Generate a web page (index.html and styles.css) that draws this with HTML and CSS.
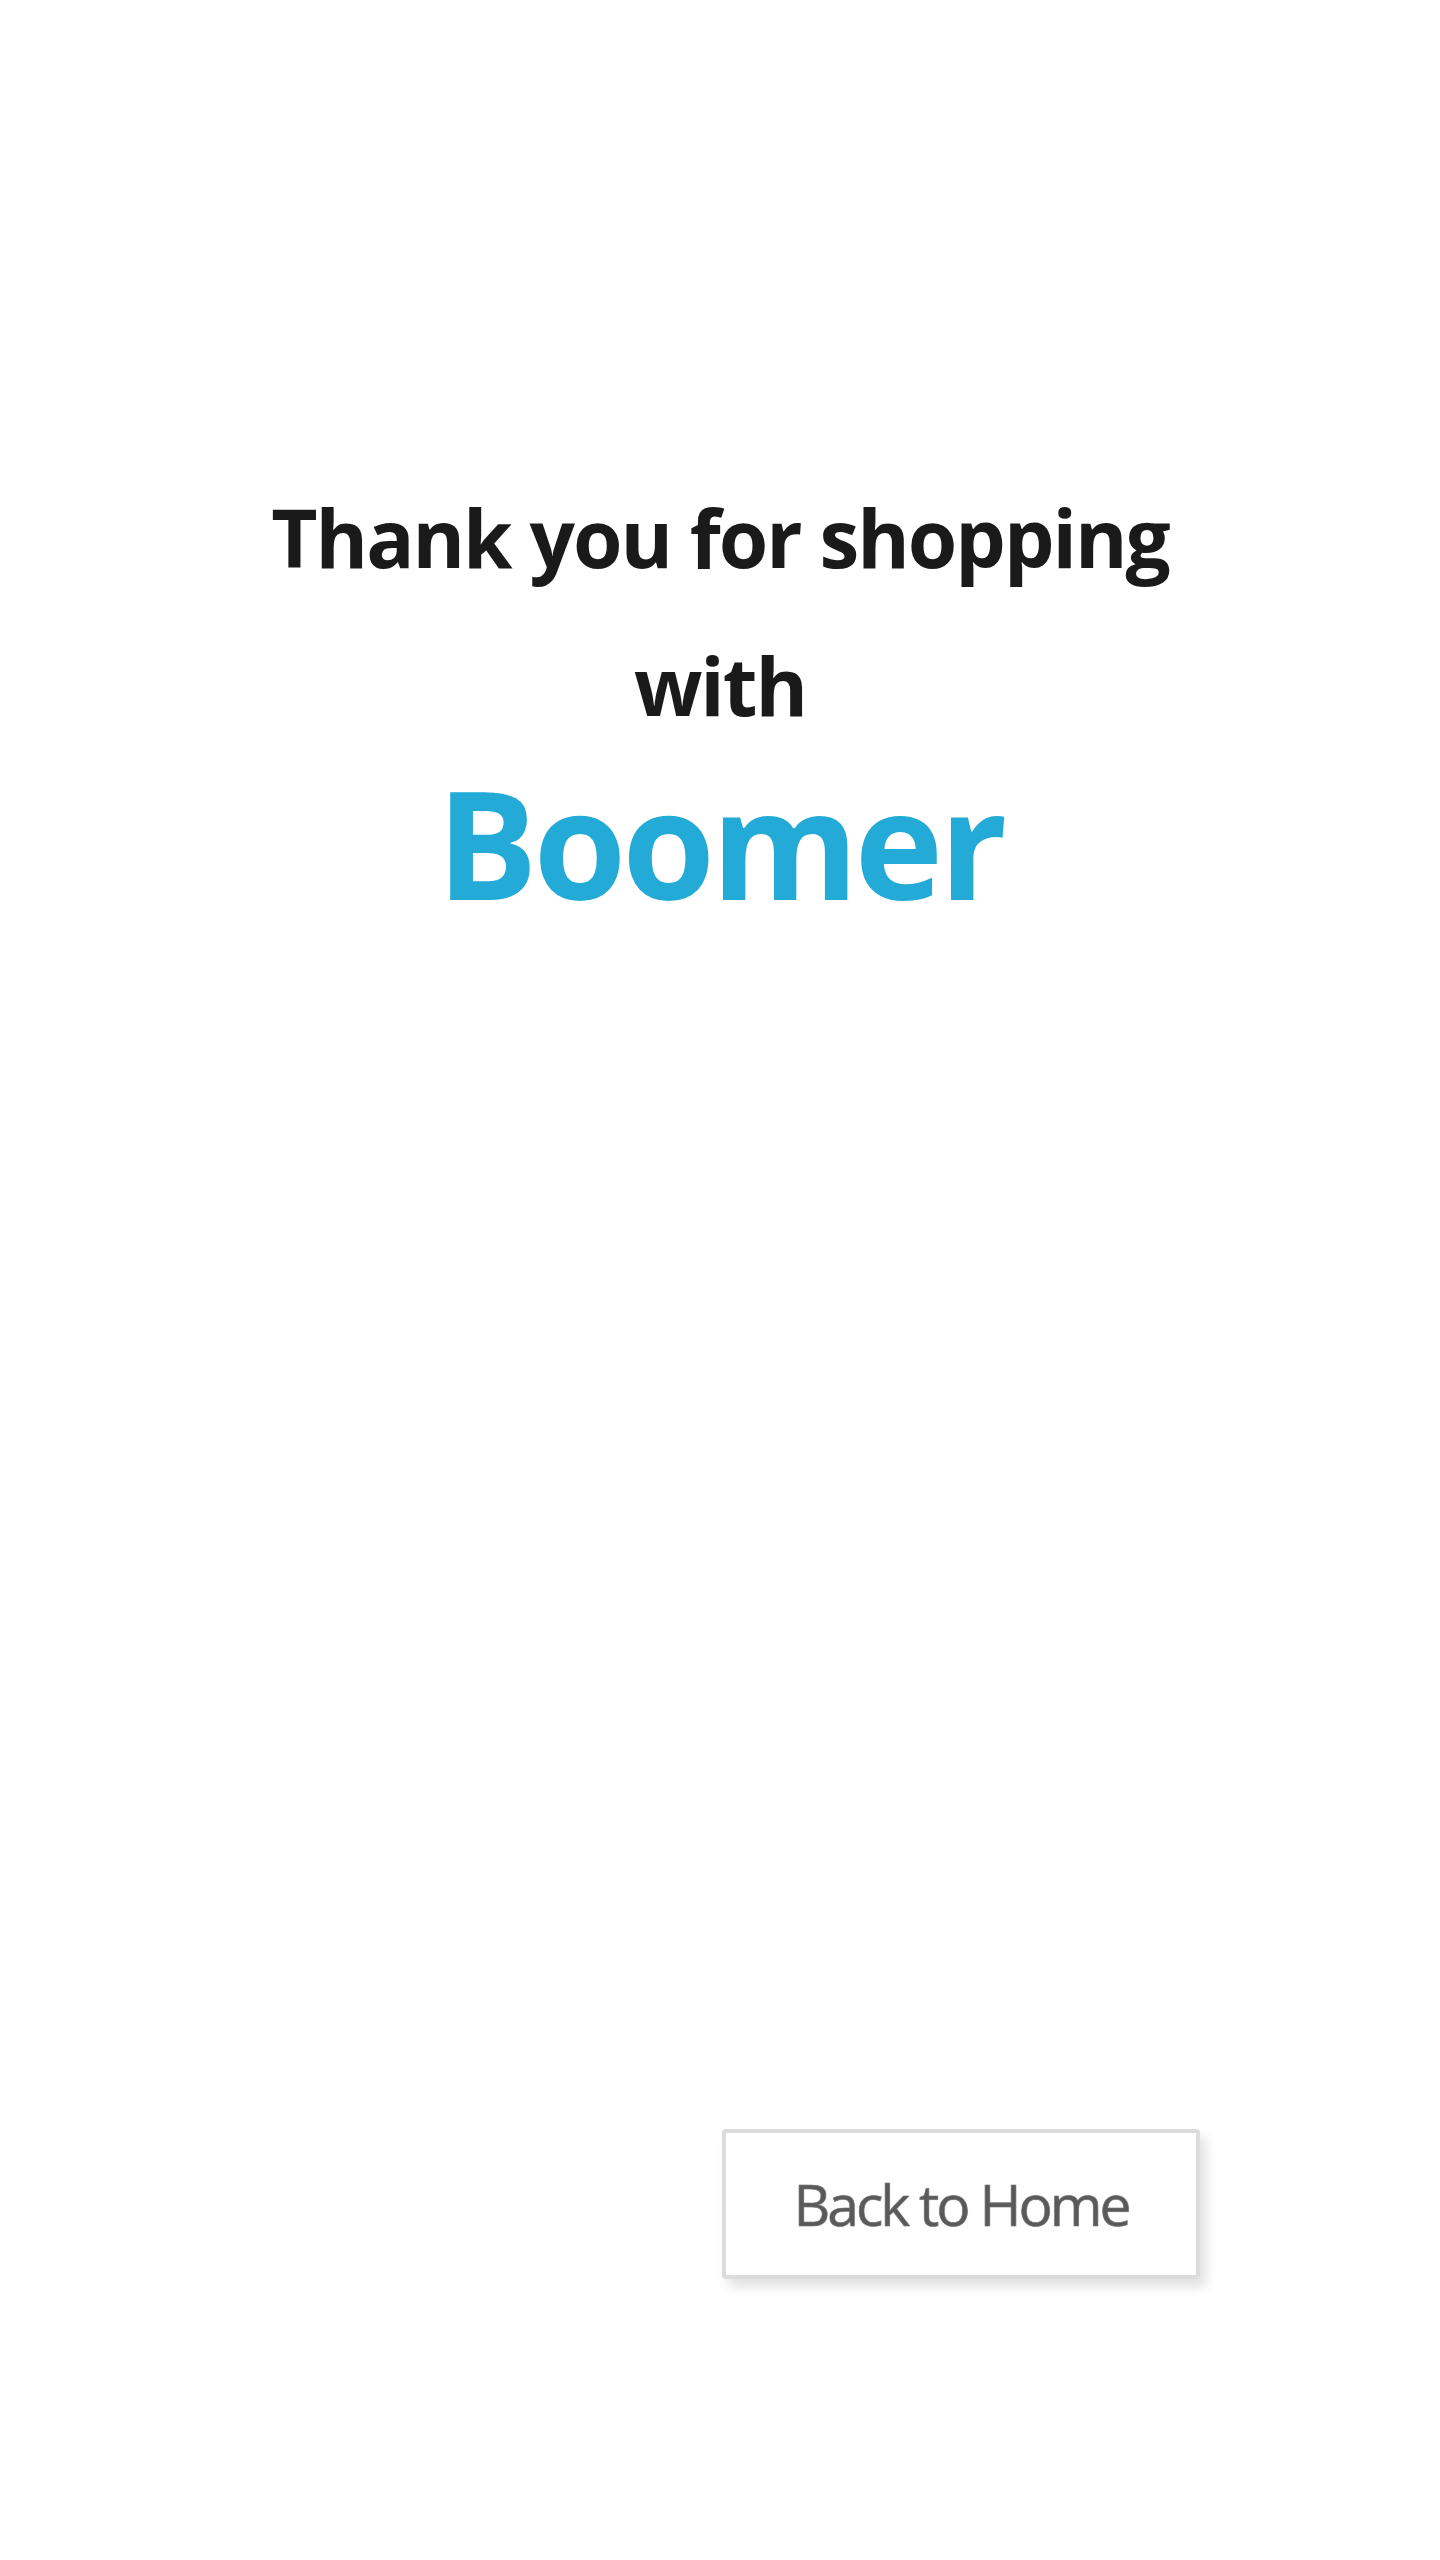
FILE: index.html
```html
<!DOCTYPE html>
<html lang="en">
<head>
<meta charset="utf-8">
<title>Thank you</title>
<link rel="stylesheet" href="styles.css">
</head>
<body>
<main class="page">
  <section class="thanks">
    <h1 class="thanks-title">Thank you for shopping with</h1>
    <p class="brand">Boomer</p>
  </section>
  <div class="actions">
    <div class="spacer"></div>
    <div class="action-col">
      <button class="home-btn" type="button">Back to Home</button>
    </div>
  </div>
</main>
</body>
</html>
```

FILE: styles.css
```css
html, body {
  margin: 0;
  padding: 0;
  background: #ffffff;
}

body {
  font-family: "Open Sans", "Noto Sans", "Liberation Sans", sans-serif;
}

.page {
  width: 1440px;
  min-height: 2560px;
  padding-top: 463px;
  box-sizing: border-box;
}

.thanks {
  display: flex;
  flex-direction: column;
  align-items: center;
}

.thanks-title {
  margin: 0;
  max-width: 960px;
  font-size: 80px;
  line-height: 148px;
  font-weight: 700;
  color: #1a1a1a;
  text-align: center;
  letter-spacing: -2px;
}

.brand {
  margin: 8px 0 0;
  font-size: 150px;
  line-height: 150px;
  font-weight: 700;
  color: #23aad6;
  letter-spacing: -4px;
}

.actions {
  display: grid;
  grid-template-columns: 1fr 1fr;
  margin-top: 1212px;
}

.action-col {
  display: flex;
  padding-left: 2px;
}

.home-btn {
  width: 478px;
  height: 150px;
  border: 4px solid #dcdcdc;
  border-radius: 4px;
  background: #ffffff;
  box-shadow: 6px 8px 12px rgba(0, 0, 0, 0.12);
  font-family: "Open Sans", "Noto Sans", sans-serif;
  font-size: 57px;
  font-weight: 400;
  color: #5a5a5a;
  text-shadow: 0 0 1px #8a8a8a;
  -webkit-text-stroke: 0.6px #7a7a7a;
  letter-spacing: -3px;
  padding: 0;
  cursor: pointer;
}
```
